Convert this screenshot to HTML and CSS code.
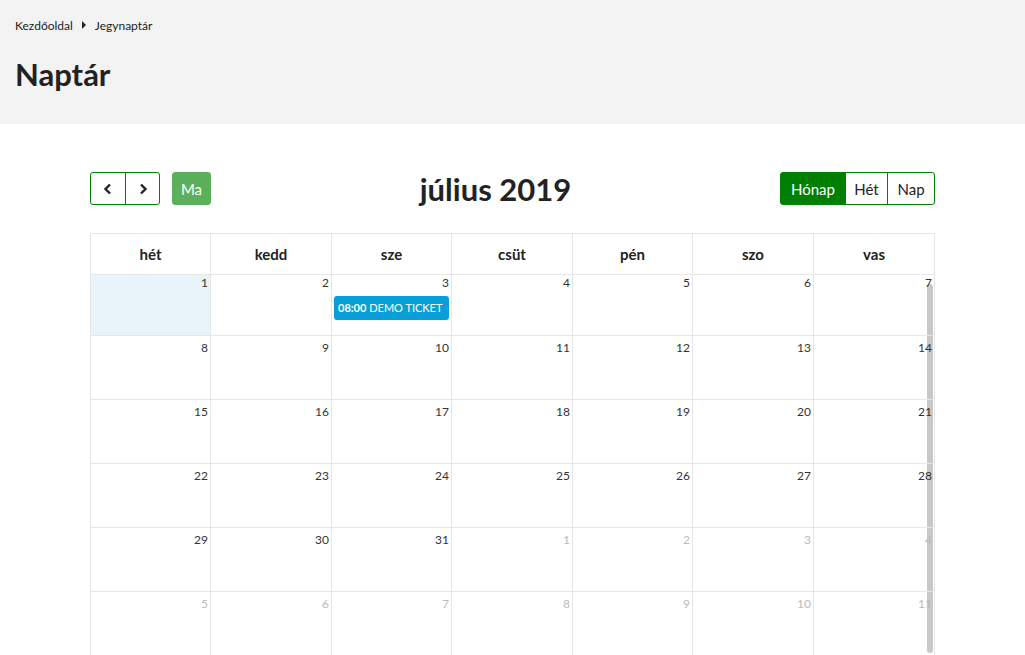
FILE: index.html
```html
<!DOCTYPE html>
<html lang="hu">
<head>
<meta charset="utf-8">
<title>Naptár</title>
<link rel="stylesheet" href="styles.css">
</head>
<body>
<header class="page-head">
  <nav class="crumbs">
    <span>Kezdőoldal</span>
    <svg class="crumb-sep" width="6" height="8" viewBox="0 0 6 8"><path d="M1 0 L5 4 L1 8 Z" fill="#222"/></svg>
    <span>Jegynaptár</span>
  </nav>
  <h1 class="page-title">Naptár</h1>
</header>

<main class="calendar">
  <div class="toolbar">
    <div class="tb-left">
      <div class="btn-group">
        <button class="btn btn-outline"><svg width="10" height="12" viewBox="0 0 10 12"><path d="M7 1.5 L2.5 6 L7 10.5" fill="none" stroke="#222" stroke-width="2.4"/></svg></button>
        <button class="btn btn-outline"><svg width="10" height="12" viewBox="0 0 10 12"><path d="M3 1.5 L7.5 6 L3 10.5" fill="none" stroke="#222" stroke-width="2.4"/></svg></button>
      </div>
      <button class="btn btn-today">Ma</button>
    </div>
    <h2 class="cal-title">július 2019</h2>
    <div class="btn-group tb-right">
      <button class="btn btn-outline btn-active">Hónap</button>
      <button class="btn btn-outline">Hét</button>
      <button class="btn btn-outline">Nap</button>
    </div>
  </div>

  <div class="grid">
    <div class="scrollbar"></div>

    <div class="head">hét</div><div class="head">kedd</div><div class="head">sze</div><div class="head">csüt</div><div class="head">pén</div><div class="head">szo</div><div class="head">vas</div>

    <div class="day first today">1</div>
    <div class="day first">2</div>
    <div class="day first has-event">3<div class="event"><b>08:00</b> DEMO TICKET</div></div>
    <div class="day first">4</div>
    <div class="day first">5</div>
    <div class="day first">6</div>
    <div class="day first">7</div>

    <div class="day">8</div><div class="day">9</div><div class="day">10</div><div class="day">11</div><div class="day">12</div><div class="day">13</div><div class="day">14</div>
    <div class="day">15</div><div class="day">16</div><div class="day">17</div><div class="day">18</div><div class="day">19</div><div class="day">20</div><div class="day">21</div>
    <div class="day">22</div><div class="day">23</div><div class="day">24</div><div class="day">25</div><div class="day">26</div><div class="day">27</div><div class="day">28</div>
    <div class="day">29</div><div class="day">30</div><div class="day">31</div><div class="day other">1</div><div class="day other">2</div><div class="day other">3</div><div class="day other">4</div>
    <div class="day other">5</div><div class="day other">6</div><div class="day other">7</div><div class="day other">8</div><div class="day other">9</div><div class="day other">10</div><div class="day other">11</div>
  </div>
</main>
</body>
</html>
```

FILE: styles.css
```css
html, body {
  margin: 0;
  padding: 0;
  background: #fff;
  font-family: "Lato", "Open Sans", sans-serif;
  color: #222;
  overflow: hidden;
}

.page-head {
  background: #f3f3f3;
  height: 124px;
  box-sizing: border-box;
  padding: 17px 15px 0;
}

.crumbs {
  display: flex;
  align-items: center;
  gap: 7px;
  font-size: 12px;
  color: #222;
  height: 16px;
}

.crumb-sep { margin: 0 1px; }

.page-title {
  margin: 23px 0 0;
  font-size: 31px;
  font-weight: 700;
  line-height: 36px;
  color: #222;
}

.calendar {
  width: 845px;
  margin: 48px auto 0;
}

.toolbar {
  display: flex;
  align-items: center;
  justify-content: space-between;
  height: 33px;
}

.tb-left {
  display: flex;
  gap: 12px;
  align-items: center;
}

.btn-group {
  display: flex;
}

.btn {
  font-family: inherit;
  font-size: 15px;
  height: 33px;
  padding: 0 10px;
  background: #fff;
  color: #222;
  border: 1px solid #008000;
  display: flex;
  align-items: center;
  justify-content: center;
  cursor: pointer;
  box-sizing: border-box;
}

.btn-group .btn { border-radius: 0; }
.btn-group .btn + .btn { margin-left: -1px; }
.btn-group .btn:first-child { border-radius: 3px 0 0 3px; }
.btn-group .btn:last-child { border-radius: 0 3px 3px 0; }

.tb-left .btn-outline { width: 36px; padding: 0; }
.tb-left .btn-outline + .btn-outline { width: 35px; }

.btn-today {
  background: #5cb05c;
  border-color: #5cb05c;
  color: #fff;
  border-radius: 3px;
  width: 39px;
  padding: 0;
}

.btn-active {
  background: #008000;
  color: #fff;
}

.tb-right .btn:nth-child(1) { width: 66px; }
.tb-right .btn:nth-child(2) { width: 43px; }
.tb-right .btn:nth-child(3) { width: 48px; }

.cal-title {
  margin: 0;
  text-align: center;
  font-size: 31px;
  line-height: 38px;
  font-weight: 700;
  color: #222;
}

.grid {
  position: relative;
  margin-top: 28px;
  display: grid;
  grid-template-columns: 120px 121px 120px 121px 120px 121px 121px;
  grid-template-rows: 41px 61px 64px 64px 64px 64px 64px;
  border-top: 1px solid #e6e6e6;
  border-left: 1px solid #e6e6e6;
}

.head, .day {
  position: relative;
  border-right: 1px solid #e6e6e6;
  border-bottom: 1px solid #e6e6e6;
}

.head {
  display: flex;
  align-items: center;
  justify-content: center;
  font-size: 15px;
  font-weight: 700;
  color: #222;
}

.day {
  font-size: 12px;
  text-align: right;
  padding: 4px 2px 0 0;
  color: #333;
  box-sizing: border-box;
}

.day.first { padding-top: 0; }

.day.today { background: #e8f4f9; }

.day.other { color: #bbb; }

.event {
  margin: 6px 0 0 2px;
  height: 24px;
  background: #079fd7;
  color: #fff;
  border-radius: 3px;
  font-size: 11px;
  text-align: left;
  padding-left: 4px;
  line-height: 24px;
  white-space: nowrap;
}

.event b { font-weight: 700; }

.scrollbar {
  position: absolute;
  left: 836px;
  top: 50px;
  width: 6px;
  height: 369px;
  background: #c8c8c8;
  border-radius: 3px;
}
```
